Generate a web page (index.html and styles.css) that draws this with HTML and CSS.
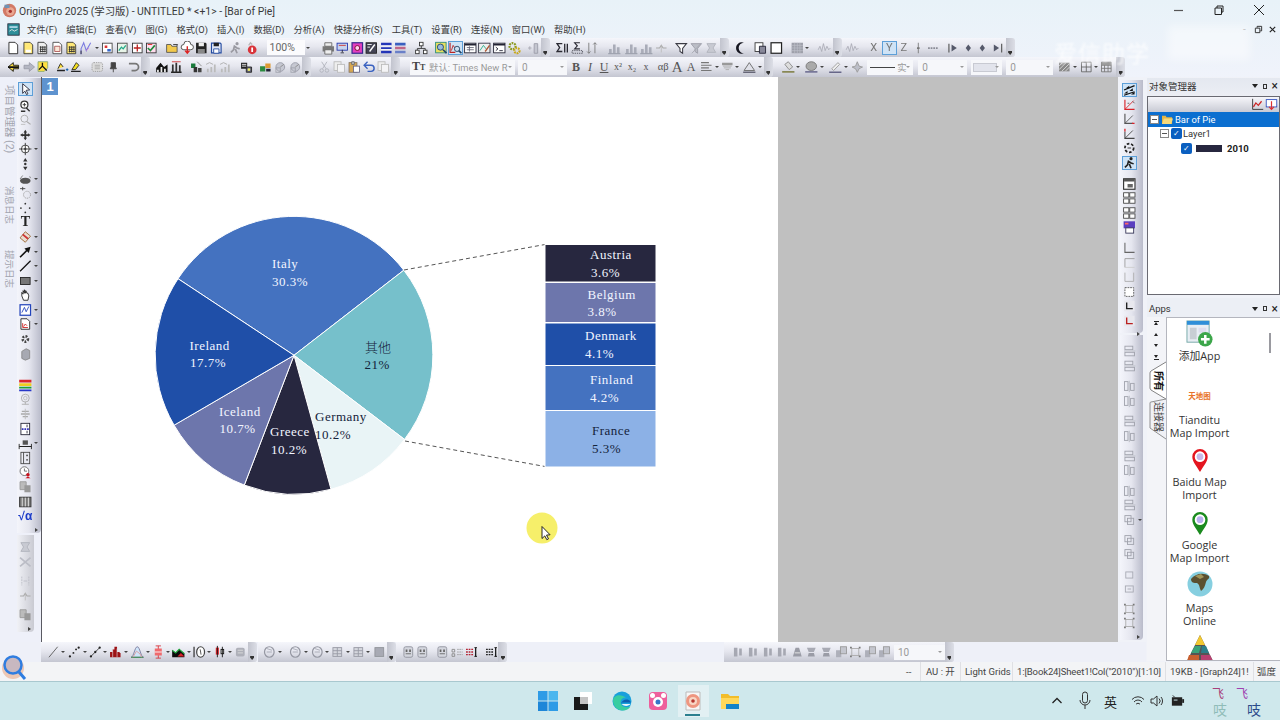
FILE: index.html
```html
<!DOCTYPE html>
<html lang="zh">
<head>
<meta charset="utf-8">
<title>OriginPro 2025</title>
<link rel="stylesheet" href="styles.css">
</head>
<body>
<svg class="defs" aria-hidden="true">
<symbol id="doc" viewBox="0 0 16 16"><path d="M3 1.5h7l3 3v10H3z" fill="#fff" stroke="#222"/></symbol>
<symbol id="docy" viewBox="0 0 16 16"><path d="M3 1.5h7l3 3v10H3z" fill="#ffe878" stroke="#333"/><path d="M5 10h6v3H5z" fill="#fff"/></symbol>
<symbol id="tbl" viewBox="0 0 16 16"><path d="M3 1.5h7l3 3v10H3z" fill="#eee" stroke="#333"/><path d="M5 7h7M5 9.5h7M5 12h7M6 6v7M8.500 6v7M11 6v7" stroke="#333"/></symbol>
<symbol id="tbly" viewBox="0 0 16 16"><path d="M3 1.500h7l3 3v10H3z" fill="#ffe878" stroke="#333"/><path d="M5 7h7M5 9.500h7M5 12h7M6 6v7M8.500 6v7M11 6v7" stroke="#333"/></symbol>
<symbol id="note" viewBox="0 0 16 16"><path d="M3 1.500h7l3 3v10H3z" fill="#fff" stroke="#444"/><path d="M5 6h6v6H5z" fill="#fbe7d8" stroke="#a55"/></symbol>
<symbol id="grf" viewBox="0 0 16 16"><path d="M2 15V9l3-7 3 9 5-9" fill="none" stroke="#7a7ae0" stroke-width="1.200"/><path d="M2 15v-4" stroke="#222"/><path d="M8 11l3-3" stroke="#e58bd0"/></symbol>
<symbol id="im1" viewBox="0 0 16 16"><rect x="2.500" y="2.500" width="11" height="11" fill="#fff" stroke="#444"/><path d="M5 5h3v3H5z" fill="#d33"/><path d="M8 9h4v3H8z" fill="#36c"/></symbol>
<symbol id="im2" viewBox="0 0 16 16"><rect x="2.500" y="2.500" width="11" height="11" fill="#e8f4e8" stroke="#444"/><path d="M4 11l3-4 2 2 3-4" fill="none" stroke="#2a8" stroke-width="1.500"/></symbol>
<symbol id="im3" viewBox="0 0 16 16"><rect x="2.500" y="2.500" width="11" height="11" fill="#fff" stroke="#333"/><path d="M8 4v8M4 8h8" stroke="#b22" stroke-width="1.500"/></symbol>
<symbol id="im4" viewBox="0 0 16 16"><rect x="2.500" y="2.500" width="11" height="11" fill="#fde" stroke="#333"/><path d="M4 8l3 3 5-6" fill="none" stroke="#1a8a3a" stroke-width="1.800"/><path d="M4 4h5" stroke="#d22"/></symbol>
<symbol id="fold" viewBox="0 0 16 16"><path d="M1.500 13V4h5l1 2h6v7z" fill="#f2c94c" stroke="#555"/><path d="M9 4h5l-1 2" fill="none" stroke="#333"/></symbol>
<symbol id="cloud" viewBox="0 0 16 16"><path d="M4 10a3 3 0 0 1 0-6 4 4 0 0 1 8 0 3 3 0 0 1 0 6z" fill="#fff" stroke="#444"/><path d="M8 6v8M5.500 11L8 14l2.500-3" fill="none" stroke="#d22" stroke-width="1.600"/></symbol>
<symbol id="disk" viewBox="0 0 16 16"><path d="M2 2h11l1 1v11H2z" fill="#222"/><path d="M5 2h6v4H5z" fill="#eee"/><path d="M4 9h8v5H4z" fill="#888"/></symbol>
<symbol id="diskb" viewBox="0 0 16 16"><path d="M2.500 2.500h10l1 1v10h-11z" fill="#dfe6f7" stroke="#234ba0" stroke-width="1.300"/><path d="M5 2h6v4H5z" fill="#222"/><path d="M5 9h6v5H5z" fill="#fff" stroke="#234ba0"/></symbol>
<symbol id="run" viewBox="0 0 16 16"><circle cx="10" cy="3" r="1.800" fill="#9a9aa2"/><path d="M3 13l3-3 1-4 3 2 3 1M8 9l2 5" fill="none" stroke="#9a9aa2" stroke-width="2"/></symbol>
<symbol id="stop" viewBox="0 0 16 16"><circle cx="9" cy="10" r="5" fill="#d9343a"/><path d="M9 7.500v5" stroke="#fff" stroke-width="2"/><path d="M5 5l2-3 2 2" fill="none" stroke="#b8b8b8" stroke-width="1.500"/></symbol>
<symbol id="prt" viewBox="0 0 16 16"><path d="M1.500 6h13v6h-13z" fill="#777"/><path d="M4 2h8v4H4zM4 10h8v5H4z" fill="#eee" stroke="#666"/></symbol>
<symbol id="scr" viewBox="0 0 16 16"><rect x="2" y="2.500" width="12" height="8" fill="#c7d4ee" stroke="#2233aa"/><path d="M6 13h4v1H6z" fill="#223"/><path d="M8 10v3" stroke="#223"/><path d="M4 5h8" stroke="#c33"/></symbol>
<symbol id="pnk" viewBox="0 0 16 16"><rect x="2" y="2" width="12" height="12" fill="#e33fc0" stroke="#3a2a90" stroke-width="1.400"/><circle cx="8" cy="8" r="2.800" fill="#ffd0f0" stroke="#702"/></symbol>
<symbol id="pen" viewBox="0 0 16 16"><rect x="2" y="2" width="12" height="12" fill="#445" stroke="#222"/><path d="M3.500 4h5M3.500 7h3" stroke="#fff"/><path d="M6 12l6-8" stroke="#fff" stroke-width="1.600"/></symbol>
<symbol id="bars3" viewBox="0 0 16 16"><path d="M2 2h12v3H2zM2 7h12v2H2zM2 11h12v3H2z" fill="#2436b8"/><path d="M2 5.500h12M2 10h12" stroke="#fff"/></symbol>
<symbol id="lay" viewBox="0 0 16 16"><path d="M2 2h12v3H2z" fill="#3a5fc0"/><path d="M2 6.500h12v3H2z" fill="#c06688"/><path d="M2 11h12v3H2z" fill="#6a80c8"/></symbol>
<symbol id="tree" viewBox="0 0 16 16"><g fill="#fff" stroke="#333"><rect x="6" y="1.500" width="4" height="4"/><rect x="1.500" y="10.500" width="4" height="4"/><rect x="10.500" y="10.500" width="4" height="4"/></g><path d="M8 5.500v3M3.500 10.500v-2h9v2" fill="none" stroke="#333"/></symbol>
<symbol id="find" viewBox="0 0 16 16"><rect x="1.500" y="1.500" width="12" height="12" fill="#e8e060" stroke="#2a8a7a"/><circle cx="7" cy="7" r="3.500" fill="#9bd" stroke="#246"/><path d="M10 10l4 4" stroke="#246" stroke-width="2"/></symbol>
<symbol id="find2" viewBox="0 0 16 16"><path d="M2 2v11h6" fill="none" stroke="#b22" stroke-width="1.300"/><path d="M3.500 11l2-6 2 3" fill="none" stroke="#b22"/><circle cx="10" cy="9" r="3" fill="#cde" stroke="#246"/><path d="M12 11l3 3" stroke="#246" stroke-width="2"/></symbol>
<symbol id="win" viewBox="0 0 16 16"><rect x="1.500" y="2.500" width="13" height="11" fill="#fff" stroke="#223"/><path d="M1.500 3h13v2h-13z" fill="#223"/><path d="M4 7.500h8M4 10h8M7 6v6" stroke="#667"/></symbol>
<symbol id="win2" viewBox="0 0 16 16"><rect x="1.500" y="2.500" width="13" height="11" fill="#eee" stroke="#334"/><path d="M3 11l4-6 3 4" fill="none" stroke="#2a8"/><path d="M9 12l5-7" stroke="#a53" stroke-width="1.500"/></symbol>
<symbol id="term" viewBox="0 0 16 16"><rect x="1.500" y="2.500" width="13" height="11" fill="#fff" stroke="#223"/><path d="M1.500 3h13v2h-13z" fill="#223"/><path d="M4 7l2.500 2L4 11M8 11h4" fill="none" stroke="#223"/></symbol>
<symbol id="gear" viewBox="0 0 16 16"><circle cx="6" cy="6" r="3.500" fill="none" stroke="#8a9a20" stroke-width="2.500" stroke-dasharray="2 1"/><circle cx="11" cy="11" r="3" fill="none" stroke="#c8a818" stroke-width="2.500" stroke-dasharray="2 1"/></symbol>
<symbol id="gbar" viewBox="0 0 16 16"><path d="M2 14V9h3v5zM6.500 14V4h3v10zM11 14V7h3v7z" fill="#a9acb8"/><path d="M1 14.500h14" stroke="#8f92a0"/></symbol>
<symbol id="gplus" viewBox="0 0 16 16"><path d="M2 8h4M4 6v4" stroke="#a8a8b2"/><path d="M9 3h4v11H9z" fill="#c4c6d0" stroke="#9a9ca8"/></symbol>
<symbol id="sig" viewBox="0 0 16 16"><path d="M8 3H2l3 4.500L2 12h6" fill="none" stroke="#2a2a33" stroke-width="1.500"/><path d="M10 3h1.500v10H10zM13 3h1.500v10H13z" fill="#2a2a33"/></symbol>
<symbol id="sig2" viewBox="0 0 16 16"><path d="M11 2H5l3 3.500L5 9h6" fill="none" stroke="#2a2a33" stroke-width="1.300"/><path d="M2 11h12v3H2z" fill="none" stroke="#4a4a55" stroke-dasharray="1.500 1"/></symbol>
<symbol id="sort" viewBox="0 0 16 16"><path d="M4 2v12M2 12l2 2 2-2M11 14V2M9 4l2-2 2 2" fill="none" stroke="#777"/></symbol>
<symbol id="funnel" viewBox="0 0 16 16"><path d="M2 3h12L9.500 8.500V14l-3-2V8.500z" fill="#fff" stroke="#3b3b44" stroke-width="1.200"/></symbol>
<symbol id="funnelg" viewBox="0 0 16 16"><path d="M2 3h12L9.500 8.500V14l-3-2V8.500z" fill="#bbbdc6" stroke="#9b9da8"/><path d="M3 14L13 3" stroke="#a5a7b0"/></symbol>
<symbol id="moon" viewBox="0 0 16 16"><path d="M11 2a6.500 6.500 0 1 0 0 12 5.500 5.500 0 0 1 0-12z" fill="#161620"/></symbol>
<symbol id="cop" viewBox="0 0 16 16"><rect x="2" y="2" width="9" height="10" fill="#fff" stroke="#333"/><path d="M7 6h7v8H7z" fill="#889" stroke="#223"/></symbol>
<symbol id="blk" viewBox="0 0 16 16"><rect x="2" y="2" width="12" height="12" fill="#fff" stroke="#222" stroke-width="1.400"/><path d="M10 4.500a3.500 3.500 0 1 0 0 7 3 3 0 0 1 0-7z" fill="#222"/></symbol>
<symbol id="gmat" viewBox="0 0 16 16"><rect x="1.500" y="2" width="13" height="12" fill="#9ea0aa"/><path d="M1.500 5h13M1.500 8h13M1.500 11h13M5 2v12M8 2v12M11 2v12" stroke="#c0c2cc" stroke-width=".7"/></symbol>
<symbol id="gwav" viewBox="0 0 16 16"><path d="M1 10l2-4 2 6 2-9 2 8 2-5 2 4 2-2" fill="none" stroke="#aaacb6"/></symbol>
<symbol id="gdash" viewBox="0 0 16 16"><path d="M2 8h12" stroke="#8a8c96" stroke-width="2" stroke-dasharray="2 1"/></symbol>
<symbol id="bar1" viewBox="0 0 16 16"><path d="M8 2v12" stroke="#777"/><path d="M6.500 7h3v2h-3z" fill="#777"/></symbol>
<symbol id="nav1" viewBox="0 0 16 16"><path d="M3 3v10" stroke="#555" stroke-width="1.300"/><path d="M12 8L6 4v8z" fill="#55596a"/></symbol>
<symbol id="nav2" viewBox="0 0 16 16"><path d="M8 4l-3 4 3 4 3-4z" fill="#55596a"/></symbol>
<symbol id="nav3" viewBox="0 0 16 16"><path d="M13 3v10" stroke="#555" stroke-width="1.300"/><path d="M4 4l6 4-6 4z" fill="#55596a"/></symbol>
<symbol id="bkl" viewBox="0 0 16 16"><path d="M2 8l6-5v3h6v4H8v3z" fill="#ffe040" stroke="#111"/><path d="M2 8h12" stroke="#111" stroke-width="2"/></symbol>
<symbol id="bkr" viewBox="0 0 16 16"><path d="M14 8L8 3v3H2v4h6v3z" fill="#b4b6c2" stroke="#9a9ca8"/></symbol>
<symbol id="bk3" viewBox="0 0 16 16"><path d="M2 2h11v7l-4 4H2z" fill="#ffe040" stroke="#8a7"/><path d="M3 11l4-4 5 5M7 7V3" stroke="#111" stroke-width="1.500" fill="none"/></symbol>
<symbol id="pt1" viewBox="0 0 16 16"><path d="M2 12h9" stroke="#222" stroke-width="1.500"/><path d="M3 10l3-6 3 4" fill="#ffe040" stroke="#222"/><path d="M12 11h3M13.500 9.500v3" stroke="#05a"/></symbol>
<symbol id="pt2" viewBox="0 0 16 16"><path d="M2 13h11" stroke="#222" stroke-width="1.500"/><path d="M3 11l5-8 3 3-4 5z" fill="#f5e020" stroke="#222"/></symbol>
<symbol id="grp" viewBox="0 0 16 16"><rect x="2" y="3" width="12" height="10" rx="2" fill="#ddd" stroke="#999" stroke-dasharray="1.500 1"/><path d="M5 6h6M5 8h6M5 10h6" stroke="#aaa"/></symbol>
<symbol id="pin" viewBox="0 0 16 16"><path d="M5.500 3h5v5l1 2h-7l1-2zM8 10v4" fill="#444" stroke="#444"/></symbol>
<symbol id="undo" viewBox="0 0 16 16"><path d="M3 4h7a3.500 3.500 0 0 1 0 8H6" fill="none" stroke="#777" stroke-width="2"/></symbol>
<symbol id="ch1" viewBox="0 0 16 16"><path d="M1 14V9l5-6 4 5 4-3v9z" fill="#111"/><path d="M2 14V11h2v3zM6 14V8h2v6zM10 14V10h2v4z" fill="#eee"/></symbol>
<symbol id="ch2" viewBox="0 0 16 16"><path d="M2 14h12" stroke="#222" stroke-width="1.500"/><path d="M3 5h2v9H3zM7 3h2v11H7zM11 6h2v8h-2z" fill="#333"/><path d="M3 2h10" stroke="#c33"/></symbol>
<symbol id="ch3" viewBox="0 0 16 16"><path d="M2 4h5v5H2z" fill="#187a3a"/><path d="M5 8h4v6H5z" fill="#333"/><path d="M10 9h4v5h-4z" fill="#444"/><path d="M9 2l5 5" stroke="#888"/></symbol>
<symbol id="ch4" viewBox="0 0 16 16"><path d="M3 14V10h2v4zM7 14V8h2v6zM11 14V5h2v9z" fill="#bbb"/><path d="M2 5l4-2 4 2" fill="none" stroke="#aaa"/></symbol>
<symbol id="ch5" viewBox="0 0 16 16"><path d="M2 3h7v7H2z" fill="#222"/><path d="M3 5h5M3 7h5" stroke="#eee"/><path d="M8 8h6v6H8z" fill="#667" stroke="#222"/><circle cx="11" cy="11" r="1.500" fill="#ee6"/></symbol>
<symbol id="ch6" viewBox="0 0 16 16"><path d="M2 7h6v6H2z" fill="#2b8a3e"/><path d="M8 4h6v5H8z" fill="#d93"/><path d="M9 10h5v3H9z" fill="#223"/></symbol>
<symbol id="gcirc" viewBox="0 0 16 16"><circle cx="8" cy="8" r="5" fill="#c6c8d2" stroke="#9a9ca8"/><path d="M8 8l4-3" stroke="#888"/><rect x="3" y="9" width="5" height="5" fill="none" stroke="#a0a2ac"/></symbol>
<symbol id="cut" viewBox="0 0 16 16"><path d="M5 2l5 8M11 2l-5 8" stroke="#b0b2bc"/><circle cx="5" cy="12" r="2" fill="none" stroke="#b0b2bc"/><circle cx="11" cy="12" r="2" fill="none" stroke="#b0b2bc"/></symbol>
<symbol id="cp" viewBox="0 0 16 16"><rect x="2" y="2" width="8" height="10" fill="#eee" stroke="#bbb"/><rect x="6" y="5" width="8" height="9" fill="#f4f4f6" stroke="#bbb"/></symbol>
<symbol id="paste" viewBox="0 0 16 16"><rect x="2" y="3" width="9" height="11" fill="#d8a850" stroke="#876"/><path d="M5 2h3v3H5z" fill="#ccc" stroke="#666"/><rect x="7" y="7" width="7" height="7" fill="#fff" stroke="#668"/></symbol>
<symbol id="undob" viewBox="0 0 16 16"><path d="M3 6h7a3 3 0 0 1 0 7H6" fill="none" stroke="#3a62c0" stroke-width="1.700"/><path d="M6 2L2 6l4 4" fill="none" stroke="#3a62c0" stroke-width="1.500"/></symbol>
<symbol id="alef" viewBox="0 0 16 16"><path d="M2 3h9M2 6h12M2 9h9M2 12h12" stroke="#777" stroke-width="1.300"/></symbol>
<symbol id="border" viewBox="0 0 16 16"><path d="M2 3h12v3H2z" fill="#999"/><path d="M3 7h10M4 9h8M6 11h4" stroke="#aaa"/></symbol>
<symbol id="tri" viewBox="0 0 16 16"><path d="M8 3l6 9H2z" fill="#dfe0e8" stroke="#666"/><path d="M1 14h14" stroke="#667" stroke-width="1.500"/></symbol>
<symbol id="fill" viewBox="0 0 16 16"><path d="M8 2l5 6-4 3-5-6z" fill="#ddd" stroke="#888"/><path d="M1 13.500h14" stroke="#885" stroke-width="2"/></symbol>
<symbol id="sphere" viewBox="0 0 16 16"><ellipse cx="8" cy="7" rx="6" ry="5" fill="#aaa" stroke="#777"/><path d="M1 13.500h14" stroke="#779" stroke-width="2"/></symbol>
<symbol id="pencil" viewBox="0 0 16 16"><path d="M4 10l7-7 2 2-7 7z" fill="#eee" stroke="#999"/><path d="M1 14h14" stroke="#668" stroke-width="1.500"/></symbol>
<symbol id="hat" viewBox="0 0 16 16"><path d="M8 2l2 5 4 1-4 2-2 4-2-4-4-2 4-1z" fill="#bcbec8" stroke="#999"/></symbol>
<symbol id="pat" viewBox="0 0 16 16"><rect x="2" y="3" width="12" height="10" fill="#888"/><path d="M2 11l8-8M5 13l9-9M2 7l4-4M9 13l5-5" stroke="#ddd"/></symbol>
<symbol id="gridg" viewBox="0 0 16 16"><path d="M2.500 2.500h11v11h-11zM2.500 8h11M8 2.500v11" fill="none" stroke="#666"/></symbol>
<symbol id="grid3" viewBox="0 0 16 16"><path d="M2.500 2.500h11v11h-11zM2.500 6h11M2.500 9.500h11M6 2.500v11M10 2.500v11" fill="none" stroke="#777"/><path d="M2.500 2.500h11V6h-11z" fill="#999"/></symbol>
<symbol id="l1" viewBox="0 0 16 16"><path d="M3 2v11h11" fill="none" stroke="#333"/></symbol>
<symbol id="sel" viewBox="0 0 16 16"><path d="M5 2l8 7-4 .500 2 4-1.500 1-2-4L5 13z" fill="#fff" stroke="#223"/></symbol>
<symbol id="zoomi" viewBox="0 0 16 16"><circle cx="7" cy="6.500" r="4" fill="#fff" stroke="#333" stroke-width="1.400"/><path d="M5 6.500h4M7 4.500v4" stroke="#333"/><path d="M3 14h5M9 10l4 4" stroke="#333" stroke-width="1.600"/></symbol>
<symbol id="zoomo" viewBox="0 0 16 16"><circle cx="7" cy="6.500" r="4" fill="none" stroke="#aaa"/><path d="M10 10l4 3" stroke="#aaa" stroke-width="1.400"/><path d="M3 13h5" stroke="#bbb"/></symbol>
<symbol id="pmv" viewBox="0 0 16 16"><path d="M8 2l2 3H9v2h2V6l3 2-3 2V9H9v2h1l-2 3-2-3h1V9H5v1L2 8l3-2v1h2V5H6z" fill="#333"/></symbol>
<symbol id="tgt" viewBox="0 0 16 16"><circle cx="8" cy="8" r="4.500" fill="#fff" stroke="#333"/><path d="M8 1v14M1 8h14" stroke="#333"/><circle cx="8" cy="8" r="1.300" fill="#333"/></symbol>
<symbol id="mv" viewBox="0 0 16 16"><path d="M8 1l2.500 4h-5zM8 15l-2.500-4h5z" fill="#333"/><circle cx="8" cy="8" r="1.400" fill="#333"/></symbol>
<symbol id="mask" viewBox="0 0 16 16"><ellipse cx="8" cy="10" rx="6" ry="3.500" fill="#555"/><path d="M2 8l3-4M13 5l1 2" stroke="#777"/></symbol>
<symbol id="spl" viewBox="0 0 16 16"><path d="M2 3h6M5 1v4" stroke="#444"/><circle cx="10" cy="10" r="4" fill="none" stroke="#999" stroke-dasharray="1.500 1"/></symbol>
<symbol id="dots" viewBox="0 0 16 16"><g fill="#333"><circle cx="8" cy="3" r="1"/><circle cx="13" cy="8" r="1"/><circle cx="8" cy="13" r="1"/><circle cx="3" cy="8" r="1"/></g></symbol>
<symbol id="eras" viewBox="0 0 16 16"><path d="M2 9l6-7 6 5-6 7z" fill="#e9ddd0" stroke="#963"/><path d="M5 5l6 5" stroke="#c33" stroke-width="2"/></symbol>
<symbol id="arr" viewBox="0 0 16 16"><path d="M2 14L11 5" stroke="#111" stroke-width="1.800"/><path d="M14 2L7 4l5 5z" fill="#111"/></symbol>
<symbol id="ln" viewBox="0 0 16 16"><path d="M2 14L14 2" stroke="#111" stroke-width="1.400"/></symbol>
<symbol id="rc" viewBox="0 0 16 16"><rect x="2.500" y="4" width="11" height="8" fill="#777" stroke="#222"/></symbol>
<symbol id="hand" viewBox="0 0 16 16"><path d="M4 9V5l1.500 2V3l1.500 3V2l1.500 4V3l1.500 3 1 0 1 3-1 5H6z" fill="#fff" stroke="#222"/></symbol>
<symbol id="wb" viewBox="0 0 16 16"><rect x="2" y="2" width="12" height="12" fill="#fff" stroke="#2244bb" stroke-width="1.400"/><path d="M4 11l3-6 2 5 3-6" fill="none" stroke="#2244bb"/></symbol>
<symbol id="wr" viewBox="0 0 16 16"><path d="M3 2h7l3 3v9H3z" fill="#fff" stroke="#222"/><path d="M5 7v5h6M6 11l2-3 2 2" fill="none" stroke="#c22"/></symbol>
<symbol id="gr2" viewBox="0 0 16 16"><circle cx="8" cy="8" r="3" fill="none" stroke="#444" stroke-width="3" stroke-dasharray="2 1.500"/></symbol>
<symbol id="gry" viewBox="0 0 16 16"><path d="M4 5l5-3 4 2v9l-5 2-4-2z" fill="#a7a9b2" stroke="#888"/></symbol>
<symbol id="clr" viewBox="0 0 16 16"><path d="M1 2h14v3H1z" fill="#d9262c"/><path d="M1 6h14v3H1z" fill="#f0cc20"/><path d="M1 10h14v2H1z" fill="#1ea03a"/><path d="M1 13h14v2H1z" fill="#2838c8"/></symbol>
<symbol id="cog" viewBox="0 0 16 16"><circle cx="8" cy="7" r="4.500" fill="none" stroke="#aaa"/><path d="M8 11v3M4 14h8" stroke="#aaa"/><circle cx="8" cy="7" r="2" fill="none" stroke="#bbb"/></symbol>
<symbol id="cy" viewBox="0 0 16 16"><path d="M3 8h10M4 5h8M5 11h6" stroke="#aaa" stroke-width="1.500"/><path d="M8 2v12" stroke="#bbb"/></symbol>
<symbol id="rdr" viewBox="0 0 16 16"><rect x="3" y="1.500" width="10" height="13" fill="#fff" stroke="#223"/><path d="M4 8h8" stroke="#33b" stroke-width="2" stroke-dasharray="2 1"/><path d="M10 3v3M10 10v3" stroke="#223"/></symbol>
<symbol id="msr" viewBox="0 0 16 16"><path d="M1 12h14" stroke="#222" stroke-width="1.300"/><path d="M1 9v6M15 9v6" stroke="#222"/><rect x="5" y="5" width="6" height="5" fill="#555"/></symbol>
<symbol id="rdl" viewBox="0 0 16 16"><rect x="3" y="1.500" width="10" height="13" fill="none" stroke="#444"/><path d="M6 1.500v13" stroke="#444"/><circle cx="10" cy="5" r="1" fill="#444"/><circle cx="10" cy="10" r="1" fill="#444"/></symbol>
<symbol id="rdc" viewBox="0 0 16 16"><circle cx="7" cy="7" r="5" fill="#fff" stroke="#666"/><path d="M7 4v3h3" fill="none" stroke="#666"/><circle cx="11" cy="11" r="2" fill="#c9121c"/><path d="M8 15l3-2 3 2z" fill="#c9121c"/></symbol>
<symbol id="gdocs" viewBox="0 0 16 16"><path d="M2 2h7v9H2z" fill="#bbb" stroke="#999"/><path d="M7 6h7v8H7z" fill="#999"/></symbol>
<symbol id="cols" viewBox="0 0 16 16"><rect x="1.500" y="2.500" width="13" height="11" fill="#777" stroke="#333"/><path d="M4.500 3v10M8 3v10M11.500 3v10" stroke="#eee"/></symbol>
<symbol id="gX" viewBox="0 0 16 16"><path d="M3 3h10L10 8l3 5H3l3-5z" fill="#c8cad2" stroke="#b0b2bc"/></symbol>
<symbol id="gX2" viewBox="0 0 16 16"><path d="M2 3l12 10M14 3L2 13" stroke="#bbbdc6" stroke-width="2"/></symbol>
<symbol id="gX3" viewBox="0 0 16 16"><path d="M4 3v10M12 3v10" stroke="#bbbdc6" stroke-dasharray="2 1"/><path d="M6 8h4" stroke="#bbbdc6"/></symbol>
<symbol id="gX4" viewBox="0 0 16 16"><path d="M2 8h4l2-3 2 3h4" fill="none" stroke="#aaa" stroke-width="1.300"/><path d="M8 5v8" stroke="#bbb"/></symbol>
<symbol id="rt1" viewBox="0 0 16 16"><path d="M2 12l4-3v3zM8 9l4-3v3zM4 6l4-3v3zM10 13l4-3v3z" fill="#111"/><path d="M2 8l12-5M2 14l12-4" stroke="#111" stroke-width="1.500"/></symbol>
<symbol id="axr" viewBox="0 0 16 16"><path d="M3 2v11h11" fill="none" stroke="#d8232a" stroke-width="1.300"/><path d="M3 13L13 3" stroke="#d8232a"/><path d="M12 4l2 2M6 6h2" stroke="#555"/></symbol>
<symbol id="axk" viewBox="0 0 16 16"><path d="M3 2v11h9" fill="none" stroke="#555" stroke-width="1.300"/><path d="M3 13L12 4" stroke="#555"/><path d="M11 13h3" stroke="#d8232a" stroke-width="1.500"/></symbol>
<symbol id="axm" viewBox="0 0 16 16"><path d="M3 5v8h11" fill="none" stroke="#444" stroke-width="1.200"/><path d="M3 13L12 4" stroke="#444"/><path d="M3 2v3" stroke="#d8232a" stroke-width="1.500"/></symbol>
<symbol id="swl" viewBox="0 0 16 16"><circle cx="8" cy="8" r="5" fill="none" stroke="#222" stroke-width="2" stroke-dasharray="3 2"/><path d="M6 8h4" stroke="#222"/></symbol>
<symbol id="rns" viewBox="0 0 16 16"><circle cx="10" cy="3" r="1.800" fill="#222"/><path d="M3 13l3-3 1-4 3 2 3 1M8 9l2 5" fill="none" stroke="#222" stroke-width="1.800"/></symbol>
<symbol id="r1" viewBox="0 0 16 16"><rect x="1.500" y="2" width="13" height="12" fill="#fff" stroke="#333" stroke-width="1.300"/><path d="M2 2h12v3H2z" fill="#555"/><path d="M6 8h6v4H6z" fill="#666"/></symbol>
<symbol id="r2" viewBox="0 0 16 16"><g fill="#fff" stroke="#444"><rect x="1.500" y="2" width="6" height="5"/><rect x="8.500" y="2" width="6" height="5"/><rect x="1.500" y="9" width="6" height="5"/><rect x="8.500" y="9" width="6" height="5"/></g></symbol>
<symbol id="r3" viewBox="0 0 16 16"><rect x="1.500" y="1.500" width="13" height="8" fill="#5b3fc0"/><path d="M3 4h4" stroke="#f66" stroke-width="2"/><rect x="4" y="9" width="9" height="6" fill="#fff" stroke="#335"/></symbol>
<symbol id="bx" viewBox="0 0 16 16"><path d="M3 2v11h11" fill="none" stroke="#666" stroke-width="1.200"/></symbol>
<symbol id="bxg" viewBox="0 0 16 16"><path d="M3 13V3h11" fill="none" stroke="#999"/><path d="M3 13h11" stroke="#ccc"/></symbol>
<symbol id="bxh" viewBox="0 0 16 16"><path d="M3 3v10h10V3" fill="none" stroke="#aaa"/></symbol>
<symbol id="bxd" viewBox="0 0 16 16"><rect x="3" y="3" width="10" height="10" fill="#fff" stroke="#555" stroke-dasharray="2 1"/></symbol>
<symbol id="bxr" viewBox="0 0 16 16"><rect x="2" y="2" width="12" height="12" fill="#e8e8ee"/><path d="M5 4v7h7" fill="none" stroke="#222" stroke-width="1.600"/></symbol>
<symbol id="bxs" viewBox="0 0 16 16"><rect x="2" y="2" width="12" height="12" fill="#e8e8ee"/><path d="M5 4v7h7" fill="none" stroke="#b22" stroke-width="1.600"/></symbol>
<symbol id="a1" viewBox="0 0 16 16"><g fill="none" stroke="#9ea0aa"><rect x="3" y="2.500" width="9" height="4"/><rect x="3" y="9.500" width="11" height="4"/></g><path d="M2 8h13" stroke="#b8bac4"/></symbol>
<symbol id="a2" viewBox="0 0 16 16"><g fill="none" stroke="#9ea0aa"><rect x="2.500" y="3" width="4" height="10"/><rect x="9.500" y="5" width="4" height="8"/></g><path d="M8 2v13" stroke="#b8bac4"/></symbol>
<symbol id="a3" viewBox="0 0 16 16"><g fill="none" stroke="#9ea0aa"><rect x="3" y="3" width="7" height="7"/><rect x="6" y="6" width="7" height="7"/></g></symbol>
<symbol id="a4" viewBox="0 0 16 16"><rect x="4" y="4" width="8" height="8" fill="none" stroke="#aaa"/><path d="M2 2h2v2H2zM12 2h2v2h-2zM2 12h2v2H2zM12 12h2v2h-2z" fill="#777"/></symbol>
<symbol id="a5" viewBox="0 0 16 16"><rect x="4" y="4.500" width="8" height="7" fill="none" stroke="#a6a8b2"/></symbol>
<symbol id="a6" viewBox="0 0 16 16"><rect x="3.500" y="4.500" width="9" height="7" fill="none" stroke="#a6a8b2"/><path d="M6 8h4" stroke="#a6a8b2"/></symbol>
<symbol id="b1" viewBox="0 0 16 16"><path d="M3 3h4v10H3zM9 4h3v8H9z" fill="#a6a8b2"/></symbol>
<symbol id="b2" viewBox="0 0 16 16"><path d="M3 13L6 3h4l3 10z" fill="#9a9ca6"/><path d="M5 9h6" stroke="#eee"/></symbol>
<symbol id="b3" viewBox="0 0 16 16"><path d="M3 3h10l-2 5H5z" fill="#a8aab4"/><path d="M5 9h6l1 4H4z" fill="#9a9ca6"/></symbol>
<symbol id="b4" viewBox="0 0 16 16"><rect x="2" y="6" width="6" height="8" fill="#aeb0ba"/><rect x="7" y="2" width="7" height="8" fill="#c4c6ce" stroke="#999"/></symbol>
<symbol id="q1" viewBox="0 0 16 16"><rect x="3" y="2" width="10" height="12" rx="2" fill="#d4d6de" stroke="#8f919c"/><path d="M5 5h2v3H5zM9 5h2v3H9z" fill="#666"/><path d="M5 10h6" stroke="#666"/></symbol>
<symbol id="q2" viewBox="0 0 16 16"><path d="M2 5h3v3H2zM2 10h3v3H2z" fill="none" stroke="#888"/><path d="M8 5h6M8 8h6M8 11h6" stroke="#888" stroke-dasharray="1.500 1"/></symbol>
<symbol id="q3" viewBox="0 0 16 16"><path d="M2 5h9M2 8h9M2 11h9" stroke="#b22030" stroke-width="1.600" stroke-dasharray="2 1"/><path d="M13 3v10" stroke="#111" stroke-width="1.400"/><path d="M11.500 3h3M11.500 13h3" stroke="#111"/></symbol>
<symbol id="q4" viewBox="0 0 16 16"><path d="M2 5h9M2 8h9M2 11h9" stroke="#222" stroke-width="1.600" stroke-dasharray="2 1"/><path d="M13 3v10" stroke="#111" stroke-width="1.400"/><path d="M11.500 3h3M11.500 13h3" stroke="#111"/></symbol>
<symbol id="s1" viewBox="0 0 16 16"><path d="M3 14L13 2" stroke="#555"/></symbol>
<symbol id="s2" viewBox="0 0 16 16"><g fill="#222"><circle cx="3" cy="13" r="1.300"/><circle cx="7" cy="9" r="1.100"/><circle cx="10" cy="5" r="1.100"/><circle cx="13" cy="3" r="1.300"/></g></symbol>
<symbol id="s3" viewBox="0 0 16 16"><path d="M3 13L13 3" stroke="#333"/><g fill="#222"><circle cx="3" cy="13" r="1.300"/><circle cx="8" cy="8" r="1.300"/><circle cx="13" cy="3" r="1.300"/></g></symbol>
<symbol id="s4" viewBox="0 0 16 16"><path d="M2 14V8h3V5h2V2h3v6h3v1h1v5z" fill="#9c1215"/><path d="M5 14V6M10 14V4" stroke="#e8e8ee" stroke-width=".7"/></symbol>
<symbol id="s5" viewBox="0 0 16 16"><path d="M1 14C4 14 5 2 8 2s4 12 7 12z" fill="#cfe5fa" stroke="#779"/><path d="M1 14h14" stroke="#2a8a3a"/><path d="M3 14l4-7 4 3 2 4" fill="none" stroke="#d99"/></symbol>
<symbol id="s6" viewBox="0 0 16 16"><path d="M8 1v14" stroke="#d8333a"/><path d="M4 4h8v8H4z" fill="#ef6a6e"/><path d="M4 8h8" stroke="#fff"/><path d="M5 1h6M5 15h6" stroke="#d8333a"/></symbol>
<symbol id="s7" viewBox="0 0 16 16"><path d="M1 14V6l4 3 4-4 6 5v4z" fill="#0c0c0c"/><path d="M1 6l4 3 4-4 6 5" fill="none" stroke="#1ea03a" stroke-width="1.400"/><path d="M7 13l4-4 4 4z" fill="#d8232a"/></symbol>
<symbol id="s8" viewBox="0 0 16 16"><ellipse cx="9.500" cy="8" rx="4.500" ry="6" fill="#fff" stroke="#444" stroke-width="1.400"/><path d="M2 2v12" stroke="#333" stroke-width="1.400"/><path d="M9 5l1 6" stroke="#444"/></symbol>
<symbol id="s9" viewBox="0 0 16 16"><rect x="4" y="3" width="3.500" height="8" fill="#d8232a"/><path d="M5.800 1v13" stroke="#111"/><rect x="10" y="5" width="3" height="5" fill="#fff" stroke="#111"/><path d="M11.500 2v12" stroke="#111"/></symbol>
<symbol id="s10" viewBox="0 0 16 16"><rect x="3" y="3" width="10" height="10" rx="2" fill="#aeb0b9"/><path d="M5 6h6M5 9h6" stroke="#ddd"/></symbol>
<symbol id="t1" viewBox="0 0 16 16"><ellipse cx="8" cy="8" rx="5.500" ry="6" fill="none" stroke="#9597a2" stroke-width="1.400"/><path d="M5 4l6 2M5 8h6" stroke="#a5a7b2"/></symbol>
<symbol id="t2" viewBox="0 0 16 16"><rect x="3" y="3" width="10" height="10" fill="#d5d7de" stroke="#9799a4"/><path d="M3 6.500h10M3 10h10M8 3v10" stroke="#9799a4"/></symbol>
<symbol id="t3" viewBox="0 0 16 16"><rect x="3" y="3" width="10" height="10" fill="#a8aab4" stroke="#909299"/></symbol>
</svg>

<div class="app">
  <div class="title">
    <svg class="appico" viewBox="0 0 18 18"><circle cx="9" cy="9" r="8" fill="#d27a66"/><circle cx="10" cy="10" r="5" fill="#e9a792"/><path d="M3 2h6v4H3z" fill="#6f93b5"/><circle cx="10" cy="10" r="2" fill="#a8322c"/></svg>
    <span class="ttext">OriginPro 2025 (学习版) - UNTITLED * &lt;+1&gt; - [Bar of Pie]</span>
    <span class="winbtns"><svg class="wbt" viewBox="0 0 12 12"><path d="M1 6.500h9" stroke="#555" stroke-width="1.200"/></svg><svg class="wbt" viewBox="0 0 12 12"><path d="M2 4h6.500v6.500H2zM4 4V2h6v6H8.500" fill="none" stroke="#222"/></svg><svg class="wbt" viewBox="0 0 12 12"><path d="M1 1l10 10M11 1L1 11" stroke="#222"/></svg></span>
  </div>
  <div class="menu">
    <svg class="menuico" viewBox="0 0 16 16"><rect x="1" y="1" width="14" height="14" fill="#2e8f9a" stroke="#223"/><path d="M3 5h10" stroke="#bde" stroke-width="2"/><path d="M3 10l3-2 3 2 4-2" fill="none" stroke="#eee"/></svg>
    <span class="mi">文件(F)</span><span class="mi">编辑(E)</span><span class="mi">查看(V)</span><span class="mi">图(G)</span><span class="mi">格式(O)</span><span class="mi">插入(I)</span><span class="mi">数据(D)</span><span class="mi">分析(A)</span><span class="mi">快捷分析(S)</span><span class="mi">工具(T)</span><span class="mi">设置(R)</span><span class="mi">连接(N)</span><span class="mi">窗口(W)</span><span class="mi">帮助(H)</span>
    <span class="mdibtns"><span class="mdi mdig">-</span><svg class="mdis" viewBox="0 0 10 10"><path d="M1.500 3.500h5v5h-5zM3.500 3V1.500h5v5H7" fill="none" stroke="#222"/></svg><svg class="mdis" viewBox="0 0 10 10"><path d="M2 2l6 6M8 2L2 8" stroke="#222" stroke-width="1.300"/></svg></span>
  </div>

  <div class="tb tb1">
    <svg class="i"><use href="#doc"/></svg><svg class="i"><use href="#docy"/></svg><svg class="i"><use href="#tbl"/></svg><svg class="i"><use href="#note"/></svg><svg class="i"><use href="#tbly"/></svg><svg class="i"><use href="#grf"/></svg><i class="dd"></i>
    <svg class="i"><use href="#im1"/></svg><b class="s1"></b><svg class="i"><use href="#im2"/></svg><svg class="i"><use href="#im3"/></svg><svg class="i"><use href="#im4"/></svg><b class="s6"></b>
    <svg class="i"><use href="#fold"/></svg><svg class="i"><use href="#cloud"/></svg><svg class="i"><use href="#disk"/></svg><svg class="i"><use href="#diskb"/></svg><b class="s5"></b>
    <svg class="i"><use href="#run"/></svg><b class="s1"></b><svg class="i"><use href="#stop"/></svg><b class="s8"></b>
    <span class="combo c38"><span class="ctxt">100%</span></span><i class="dd"></i><b class="s10"></b>
    <svg class="i"><use href="#prt"/></svg><svg class="i"><use href="#scr"/></svg><svg class="i"><use href="#pnk"/></svg><svg class="i"><use href="#pen"/></svg><svg class="i"><use href="#bars3"/></svg><svg class="i"><use href="#lay"/></svg><b class="s6"></b>
    <svg class="i"><use href="#tree"/></svg><b class="s5"></b>
    <svg class="i"><use href="#find"/></svg><svg class="i on"><use href="#find2"/></svg><svg class="i"><use href="#win"/></svg><svg class="i"><use href="#win2"/></svg><svg class="i"><use href="#term"/></svg><svg class="i"><use href="#gear"/></svg><b class="s5"></b>
    <svg class="i"><use href="#gplus"/></svg><i class="chev"></i><b class="s5"></b>
    <svg class="i"><use href="#sig"/></svg><b class="s1"></b><svg class="i"><use href="#sig2"/></svg><svg class="i"><use href="#sort"/></svg><b class="s7"></b>
    <svg class="i"><use href="#gbar"/></svg><b class="s3"></b><svg class="i"><use href="#gbar"/></svg><svg class="i"><use href="#gbar"/></svg><b class="s1"></b><svg class="i"><use href="#gX4"/></svg><b class="s5"></b>
    <svg class="i"><use href="#funnel"/></svg><svg class="i"><use href="#funnelg"/></svg><b class="s1"></b><svg class="i"><use href="#gX"/></svg><b class="s1"></b><i class="chev"></i><b class="s5"></b>
    <svg class="i"><use href="#moon"/></svg><b class="s5"></b><svg class="i"><use href="#cop"/></svg><b class="s1"></b><svg class="i"><use href="#blk"/></svg><b class="s6"></b>
    <svg class="i"><use href="#gmat"/></svg><i class="dd"></i><b class="s7"></b><svg class="i"><use href="#gwav"/></svg><b class="s1"></b><i class="chev"></i><b class="s3"></b>
    <svg class="i"><use href="#gwav"/></svg><b class="s7"></b>
    <span class="i tx gr">X</span><b class="s1"></b><span class="i tx gr on">Y</span><span class="i tx gr">Z</span><svg class="i"><use href="#bar1"/></svg><svg class="i"><use href="#gdash"/></svg><b class="s6"></b>
    <svg class="i"><use href="#nav1"/></svg><svg class="i"><use href="#nav2"/></svg><svg class="i"><use href="#nav2"/></svg><svg class="i"><use href="#nav3"/></svg><b class="s1"></b><i class="chev"></i>
  </div>

  <div class="tb tb2">
    <svg class="i"><use href="#bkl"/></svg><b class="s1"></b><svg class="i"><use href="#bkr"/></svg><svg class="i"><use href="#bk3"/></svg><b class="s4"></b>
    <svg class="i"><use href="#pt1"/></svg><svg class="i"><use href="#pt2"/></svg><b class="s6"></b>
    <svg class="i"><use href="#grp"/></svg><b class="s1"></b><svg class="i"><use href="#pin"/></svg><b class="s6"></b>
    <svg class="i"><use href="#undo"/></svg><i class="chev"></i><b class="s5"></b>
    <svg class="i"><use href="#ch1"/></svg><svg class="i"><use href="#ch2"/></svg><b class="s5"></b>
    <svg class="i"><use href="#ch3"/></svg><svg class="i"><use href="#ch4"/></svg><svg class="i"><use href="#ch4"/></svg><b class="s6"></b>
    <svg class="i"><use href="#ch5"/></svg><b class="s5"></b>
    <svg class="i"><use href="#ch6"/></svg><svg class="i"><use href="#gcirc"/></svg><svg class="i"><use href="#gcirc"/></svg><i class="chev"></i><b class="s6"></b>
    <svg class="i"><use href="#cut"/></svg><svg class="i"><use href="#cp"/></svg><b class="s1"></b><svg class="i"><use href="#paste"/></svg><svg class="i"><use href="#undob"/></svg><svg class="i"><use href="#cp"/></svg><i class="chev"></i><b class="s10"></b>
    <span class="combo c105"><span class="fonti">T<small>T</small></span><span class="ctxt lt">默认: Times New R</span></span><b class="s3"></b>
    <span class="combo c49"><span class="ctxt lt zero">0</span></span><b class="s2"></b>
    <span class="n tx bd">B</span><span class="n tx it">I</span><span class="n tx ul">U</span><span class="n tx sm">x²</span><span class="n tx sm">x₂</span><span class="n tx sm">x</span><b class="s3"></b>
    <span class="n tx sm2">αβ</span><span class="n tx lg">A</span><span class="n tx">A</span><b class="s1"></b>
    <svg class="i"><use href="#alef"/></svg><i class="dd"></i><svg class="i"><use href="#border"/></svg><i class="dd"></i><b class="s2"></b><svg class="i"><use href="#tri"/></svg><i class="dd"></i><b class="s1"></b><i class="chev"></i><b class="s8"></b>
    <svg class="i"><use href="#fill"/></svg><i class="dd"></i><b class="s3"></b><svg class="i"><use href="#sphere"/></svg><i class="dd"></i><b class="s3"></b><svg class="i"><use href="#pencil"/></svg><i class="dd"></i><b class="s1"></b><svg class="i"><use href="#hat"/></svg><b class="s3"></b>
    <span class="combo c46"><span class="lnline"></span><span class="ctxt lt shi">实</span></span><b class="s5"></b>
    <span class="combo c49"><span class="ctxt lt zero">0</span></span><b class="s4"></b>
    <span class="combo c31"><span class="swatch"></span></span><b class="s4"></b>
    <span class="combo c47"><span class="ctxt lt zero">0</span></span><b class="s4"></b>
    <svg class="i"><use href="#pat"/></svg><i class="dd"></i><b class="s1"></b><svg class="i"><use href="#gridg"/></svg><i class="dd"></i><svg class="i"><use href="#grid3"/></svg><b class="s2"></b><i class="chev"></i>
  </div>

  <div class="work">
    <div class="wleft">
      <div class="mid">
        <div class="lpanel"><span class="vt vt1">项目管理器 (2)</span><span class="vt vt2">消息日志</span><span class="vt vt3">提示日志</span></div>
        <div class="ltb">
          <div class="vbar vb1">
            <div class="vr"><svg class="i on"><use href="#sel"/></svg></div><b class="s2"></b>
            <div class="vr"><svg class="i"><use href="#zoomi"/></svg></div>
            <div class="vr"><svg class="i"><use href="#zoomo"/></svg></div>
            <div class="vr"><svg class="i"><use href="#pmv"/></svg></div>
            <div class="vr"><svg class="i"><use href="#tgt"/></svg><i class="dd"></i></div>
            <div class="vr"><svg class="i"><use href="#mv"/></svg></div>
            <div class="vr"><svg class="i"><use href="#mask"/></svg><i class="dd"></i></div>
            <div class="vr"><svg class="i"><use href="#spl"/></svg><i class="dd"></i></div>
            <div class="vr"><svg class="i"><use href="#dots"/></svg></div>
            <div class="vr"><span class="i tx ser">T</span></div>
            <div class="vr"><svg class="i"><use href="#eras"/></svg><i class="dd"></i></div>
            <div class="vr"><svg class="i"><use href="#arr"/></svg><i class="dd"></i></div>
            <div class="vr"><svg class="i"><use href="#ln"/></svg><i class="dd"></i></div>
            <div class="vr"><svg class="i"><use href="#rc"/></svg><i class="dd"></i></div>
            <div class="vr"><svg class="i"><use href="#hand"/></svg></div>
            <div class="vr"><svg class="i"><use href="#wb"/></svg><i class="dd"></i></div>
            <div class="vr"><svg class="i"><use href="#wr"/></svg><i class="dd"></i></div>
            <div class="vr"><svg class="i"><use href="#gr2"/></svg></div>
            <div class="vr"><svg class="i"><use href="#gry"/></svg></div>
            <b class="s17"></b>
            <div class="vr"><svg class="i"><use href="#clr"/></svg></div>
            <div class="vr"><svg class="i"><use href="#cog"/></svg></div>
            <div class="vr"><svg class="i"><use href="#cy"/></svg></div>
            <div class="vr"><svg class="i"><use href="#rdr"/></svg></div>
            <div class="vr"><svg class="i"><use href="#msr"/></svg><i class="dd"></i></div>
            <div class="vr"><svg class="i"><use href="#rdl"/></svg></div>
            <div class="vr"><svg class="i"><use href="#rdc"/></svg></div>
            <div class="vr"><svg class="i"><use href="#gdocs"/></svg></div>
            <div class="vr"><svg class="i"><use href="#cols"/></svg></div>
            <div class="vr"><span class="i tx sq">√α</span></div>
            <i class="vchev"></i>
          </div>
          <div class="vbar vb2">
            <div class="vr"><svg class="i"><use href="#gX"/></svg></div>
            <div class="vr"><svg class="i"><use href="#gX2"/></svg></div><b class="s5"></b>
            <div class="vr"><svg class="i"><use href="#gX3"/></svg></div>
            <div class="vr"><svg class="i"><use href="#gX4"/></svg></div><b class="s5"></b>
            <div class="vr"><svg class="i"><use href="#gdocs"/></svg></div>
            <i class="vchev"></i>
          </div>
        </div>
        <div class="page">
          <span class="wintab">1</span>
          <svg class="chart" viewBox="42 77 736 565">
            <g stroke="#fff" stroke-width="1">
              <path d="M294 355.300L178 278.700A139 139 0 0 1 403.800 270.200Z" fill="#4472c0"/>
              <path d="M294 355.300L403.800 270.200A139 139 0 0 1 404.500 439.400Z" fill="#76c0cb"/>
              <path d="M294 355.300L404.500 439.400A139 139 0 0 1 331 489.300Z" fill="#e9f4f6"/>
              <path d="M294 355.300L331 489.300A139 139 0 0 1 244.300 485.100Z" fill="#27273f"/>
              <path d="M294 355.300L244.300 485.100A139 139 0 0 1 174.100 425.200Z" fill="#6d76ac"/>
              <path d="M294 355.300L174.100 425.200A139 139 0 0 1 178 278.700Z" fill="#1f4fa8"/>
            </g>
            <path class="dash" d="M404 270L545 244.500M405 441L545 466.500"/>
            <g stroke="#fff" stroke-width="1">
              <rect x="545" y="244.500" width="111" height="37.500" fill="#27273f"/>
              <rect x="545" y="282.500" width="111" height="40" fill="#6d76ac"/>
              <rect x="545" y="323" width="111" height="42.500" fill="#1f4fa8"/>
              <rect x="545" y="365.500" width="111" height="45" fill="#4472c0"/>
              <rect x="545" y="410.500" width="111" height="56.500" fill="#8cb1e6"/>
            </g>
            <g class="lbl lw">
              <text x="272" y="268">Italy</text><text x="272" y="286">30.3%</text>
              <text x="189.500" y="349.500">Ireland</text><text x="190" y="367">17.7%</text>
              <text x="219" y="415.500">Iceland</text><text x="219.500" y="433">10.7%</text>
              <text x="270" y="436">Greece</text><text x="271" y="453.500">10.2%</text>
              <text x="590" y="259">Austria</text><text x="591" y="276.500">3.6%</text>
              <text x="587.500" y="298.500">Belgium</text><text x="587.500" y="316">3.8%</text>
              <text x="585" y="340">Denmark</text><text x="585" y="358">4.1%</text>
              <text x="590" y="384">Finland</text><text x="590" y="401.500">4.2%</text>
            </g>
            <g class="lbl ld">
              <text x="315" y="421">Germany</text><text x="315" y="438.500">10.2%</text>
              <text class="cjk" x="365" y="351.500">其他</text><text x="364.500" y="369">21%</text>
              <text x="592" y="435">France</text><text x="592" y="452.500">5.3%</text>
            </g>
            <circle cx="542" cy="528" r="15.500" fill="#f6ef6a"/>
            <path d="M542 526.500v12l2.800-2.600 2 3.800 1.700-.9-2-3.700 3.600-.3z" fill="#fff" stroke="#111" stroke-width=".9"/>
          </svg>
        </div>
        <div class="grayarea"></div>
        <div class="rtb">
          <div class="vbar rb1">
            <div class="vr"><svg class="i on"><use href="#rt1"/></svg></div>
            <div class="vr"><svg class="i"><use href="#axr"/></svg></div>
            <div class="vr"><svg class="i"><use href="#axk"/></svg></div>
            <div class="vr"><svg class="i"><use href="#axm"/></svg></div>
            <div class="vr"><svg class="i"><use href="#swl"/></svg></div>
            <div class="vr"><svg class="i on"><use href="#rns"/></svg></div><b class="s6"></b>
            <div class="vr"><svg class="i"><use href="#r1"/></svg></div>
            <div class="vr"><svg class="i"><use href="#r2"/></svg></div>
            <div class="vr"><svg class="i"><use href="#r2"/></svg></div>
            <div class="vr"><svg class="i"><use href="#r3"/></svg></div><b class="s6"></b>
            <div class="vr"><svg class="i"><use href="#bx"/></svg></div>
            <div class="vr"><svg class="i"><use href="#bxg"/></svg></div>
            <div class="vr"><svg class="i"><use href="#bxh"/></svg></div>
            <div class="vr"><svg class="i"><use href="#bxd"/></svg></div>
            <div class="vr"><svg class="i"><use href="#bxr"/></svg></div>
            <div class="vr"><svg class="i"><use href="#bxs"/></svg></div>
            <i class="vchev"></i>
          </div>
          <div class="vbar rb2">
            <div class="vr"><svg class="i"><use href="#a1"/></svg></div>
            <div class="vr"><svg class="i"><use href="#a1"/></svg></div><b class="s6"></b>
            <div class="vr"><svg class="i"><use href="#a2"/></svg></div>
            <div class="vr"><svg class="i"><use href="#a2"/></svg></div><b class="s6"></b>
            <div class="vr"><svg class="i"><use href="#a1"/></svg></div>
            <div class="vr"><svg class="i"><use href="#a2"/></svg></div><b class="s5"></b>
            <div class="vr"><svg class="i"><use href="#a1"/></svg></div>
            <div class="vr"><svg class="i"><use href="#a2"/></svg></div><b class="s6"></b>
            <div class="vr"><svg class="i"><use href="#a2"/></svg></div>
            <div class="vr"><svg class="i"><use href="#a1"/></svg></div>
            <div class="vr"><svg class="i"><use href="#a3"/></svg><i class="dd"></i></div><b class="s5"></b>
            <div class="vr"><svg class="i"><use href="#a3"/></svg></div>
            <div class="vr"><svg class="i"><use href="#a3"/></svg></div><b class="s6"></b>
            <div class="vr"><svg class="i"><use href="#a5"/></svg></div>
            <div class="vr"><svg class="i"><use href="#a6"/></svg></div><b class="s5"></b>
            <div class="vr"><svg class="i"><use href="#a4"/></svg></div>
            <div class="vr"><svg class="i"><use href="#a4"/></svg></div>
            <i class="vchev"></i>
          </div>
        </div>
      </div>
      <div class="bottom">
        <div class="tb bt1">
          <svg class="i"><use href="#s1"/></svg><i class="dd"></i><b class="s1"></b><svg class="i"><use href="#s2"/></svg><i class="dd"></i><svg class="i"><use href="#s3"/></svg><i class="dd"></i><svg class="i"><use href="#s4"/></svg><i class="dd"></i><b class="s1"></b><svg class="i"><use href="#s5"/></svg><i class="dd"></i><svg class="i"><use href="#s6"/></svg><i class="dd"></i><svg class="i"><use href="#s7"/></svg><i class="dd"></i><svg class="i"><use href="#s8"/></svg><i class="dd"></i><svg class="i"><use href="#s9"/></svg><i class="dd"></i><svg class="i"><use href="#s10"/></svg><i class="chev"></i>
        </div>
        <div class="tb bt2">
          <svg class="i"><use href="#t1"/></svg><i class="dd"></i><b class="s5"></b><svg class="i"><use href="#t1"/></svg><i class="dd"></i><b class="s1"></b><svg class="i"><use href="#t1"/></svg><i class="dd"></i><svg class="i"><use href="#t2"/></svg><i class="dd"></i><svg class="i"><use href="#t2"/></svg><i class="dd"></i><b class="s1"></b><svg class="i"><use href="#t3"/></svg><i class="chev"></i>
        </div>
        <div class="tb bt3">
          <svg class="i"><use href="#q1"/></svg><svg class="i"><use href="#q1"/></svg><b class="s5"></b><svg class="i"><use href="#q1"/></svg><svg class="i"><use href="#q2"/></svg><svg class="i"><use href="#q3"/></svg><b class="s5"></b><svg class="i"><use href="#q4"/></svg><i class="chev"></i>
        </div>
        <div class="tb bt4">
          <svg class="i"><use href="#b1"/></svg><svg class="i"><use href="#b1"/></svg><svg class="i"><use href="#b1"/></svg><svg class="i"><use href="#b1"/></svg><svg class="i"><use href="#b2"/></svg><svg class="i"><use href="#b3"/></svg><svg class="i"><use href="#b3"/></svg><svg class="i"><use href="#b4"/></svg><svg class="i"><use href="#a4"/></svg><svg class="i"><use href="#b4"/></svg><svg class="i"><use href="#b4"/></svg><b class="s2"></b>
          <span class="combo c51"><span class="ctxt lt zero">10</span></span><i class="chev"></i>
        </div>
      </div>
    </div>
    <div class="rpanels">
      <div class="ptitle"><span>对象管理器</span><span class="pctl"><i class="ptri"></i><i class="ppin"></i><span class="px">×</span></span></div>
      <div class="obox">
        <div class="otb"><svg class="oi" viewBox="0 0 16 16"><path d="M2 1v13h13" fill="none" stroke="#222"/><path d="M3 11l3-5 3 3 4-5" fill="none" stroke="#c22" stroke-width="1.500"/></svg><svg class="oi" viewBox="0 0 16 16"><rect x="1.500" y="2" width="13" height="9" fill="#fff" stroke="#24b"/><path d="M8 4v10M5 11l3 3 3-3" fill="none" stroke="#d33" stroke-width="1.500"/></svg></div>
        <div class="row rsel"><i class="ex ex1"></i><svg class="fico" viewBox="0 0 14 12"><path d="M1 11V2h4l1 1.500h6V11z" fill="#e4b545"/><path d="M1 11l2-6h10l-2 6z" fill="#f7d97a"/></svg><span>Bar of Pie</span></div>
        <div class="row r2"><i class="ex ex2"></i><i class="chk">✓</i><span>Layer1</span></div>
        <div class="row r3"><i class="chk">✓</i><i class="sw"></i><strong>2010</strong></div>
      </div>
      <div class="ptitle ap"><span>Apps</span><span class="pctl"><i class="ptri"></i><i class="ppin"></i><span class="px">×</span></span></div>
      <div class="abox">
        <div class="atabs">
          <svg class="tabshape" viewBox="0 0 19 130"><path class="ts2" d="M19 82L4 85Q3 85 3 86V111L19 122"/><path class="ts1" d="M19 45L4 54Q3 55 3 56V71Q3 72 4 73L19 82"/></svg>
          <i class="nv nvt"></i><i class="nv nvu"></i><i class="nv nvd"></i><i class="nv nvb"></i>
          <span class="vtab vtab1">所有</span>
          <span class="vtab vtab2">连接器</span>
        </div>
        <div class="alist">
          <div class="app1 a0">
            <svg class="ai1" viewBox="0 0 28 28"><rect x="1" y="1" width="23" height="22" fill="#e8eef4" stroke="#7aa"/><path d="M1 1h23v4H1z" fill="#2f8fd8"/><path d="M4 8h7v12H4z" fill="#c8ced4"/><path d="M13 8h8v5h-8z" fill="#dde"/><circle cx="20" cy="20" r="7.500" fill="#3ca64a"/><path d="M20 15.500v9M15.500 20h9" stroke="#fff" stroke-width="2.600"/></svg>
            <span>添加App</span>
          </div>
          <div class="app1 a1x"><span class="tdt">天地图</span><span>Tianditu<br>Map Import</span></div>
          <div class="app1 a2x">
            <svg class="pinx" viewBox="0 0 20 26"><path d="M10 25C6 18 2 14 2 9a8 8 0 0 1 16 0c0 5-4 9-8 16z" fill="#e4151f"/><circle cx="10" cy="9" r="5.500" fill="#fff"/><circle cx="10" cy="9" r="3.500" fill="#c8b8e8"/></svg>
            <span>Baidu Map<br>Import</span>
          </div>
          <div class="app1 a3x">
            <svg class="pinx" viewBox="0 0 20 26"><path d="M10 25C6 18 2 14 2 9a8 8 0 0 1 16 0c0 5-4 9-8 16z" fill="#1a8a1e"/><circle cx="10" cy="9" r="5.500" fill="#fff"/><circle cx="10" cy="9" r="3.500" fill="#b8b0ee"/></svg>
            <span>Google<br>Map Import</span>
          </div>
          <div class="app1 a4x">
            <svg class="globe" viewBox="0 0 26 26"><circle cx="13" cy="13" r="12.500" fill="#86cfe0"/><path d="M4 8c4-5 12-7 18-3 1 3-2 3-3 6-1 4-2 7-5 9-2-4-1-6-4-8-3 0-6 0-6-4z" fill="#5a5030"/><path d="M8 5l6-2 3 3-4 2z" fill="#a0955a"/></svg>
            <span>Maps<br>Online</span>
          </div>
          <svg class="pyr" viewBox="0 0 26 26"><path d="M13 0l13 26H0z" fill="#555"/><path d="M13 0l5 10H8z" fill="#f2c830"/><path d="M8 11h6l-2 7H4z" fill="#3aa37a"/><path d="M15 11h4l3 7h-8z" fill="#2c7f8a"/><path d="M2 20h10v6H0z" fill="#c86030"/><path d="M14 20h9l3 6H14z" fill="#b84070"/></svg>
          <span class="ascroll"></span>
        </div>
      </div>
    </div>
  </div>

  <div class="status">
    <span class="st st1">--</span><span class="st st2">AU : 开</span><span class="st st3">Light Grids</span><span class="st st4">1:[Book24]Sheet1!Col("2010")[1:10]</span><span class="st st5">19KB - [Graph24]1!</span><span class="st st6">弧度</span>
  </div>

  <div class="task">
    <svg class="tk tk1" viewBox="0 0 20 20"><path d="M0 0h9.500v9.500H0z" fill="#2e9be6"/><path d="M10.500 0H20v9.500h-9.500z" fill="#4bb6ee"/><path d="M0 10.500h9.500V20H0z" fill="#1d86d8"/><path d="M10.500 10.500H20V20h-9.500z" fill="#2e9be6"/></svg>
    <svg class="tk tk2" viewBox="0 0 20 20"><path d="M7 1h12v12H7z" fill="#fff"/><path d="M1 6h14v13H1z" fill="#1a1a1a"/><path d="M7 6h8v7H7z" fill="#c4c4c4"/></svg>
    <svg class="tk tk3" viewBox="0 0 20 20"><circle cx="10" cy="10" r="9.500" fill="#18a0dc"/><path d="M1 9C1 15 5 19.500 11 19.500c3 0 6-1.500 7.500-4-3 1.500-8 1-9.500-2.500C7.500 9 11 6 14 7 10 3 2 3 1 9z" fill="#38cda0"/><path d="M9 13c.5-3 3.500-5 6.500-4.500 1.800.3 2.800 1.500 3.500 3H9z" fill="#0d5fb0"/><path d="M9.500 13h9c-1.500 2-6 3-9-0z" fill="#e8f6fb"/></svg>
    <svg class="tk tk4" viewBox="0 0 20 20"><rect x="1" y="1" width="18" height="18" rx="4" fill="#ee5f9c"/><circle cx="10" cy="11" r="5" fill="#fff"/><circle cx="10" cy="11" r="2.500" fill="#3677c9"/><circle cx="4.500" cy="4.500" r="2.500" fill="#fff"/><circle cx="15.500" cy="4.500" r="2.500" fill="#fff"/></svg>
    <span class="tksel"><svg class="tk5" viewBox="0 0 20 20"><path d="M3 1h14v18H3z" fill="#f7f7f7" stroke="#bbb"/><circle cx="10" cy="10" r="7" fill="#ee9680"/><circle cx="10" cy="10" r="4" fill="#f8d6c4"/><circle cx="10" cy="10" r="1.800" fill="#b5352f"/></svg><i class="tkbar"></i></span>
    <svg class="tk tk6" viewBox="0 0 20 20"><path d="M1 3h7l2 2h9v13H1z" fill="#f2bd2a"/><path d="M1 7h18v11H1z" fill="#ffd85a"/><path d="M6 13h13v5H6z" fill="#1383c9"/></svg>
    <span class="tray">
      <svg class="trc" viewBox="0 0 12 12"><path d="M1.500 8L6 3.500 10.500 8" fill="none" stroke="#222" stroke-width="1.300"/></svg>
      <svg class="trm" viewBox="0 0 14 20"><rect x="4.500" y="1" width="5" height="11" rx="2.500" fill="none" stroke="#333"/><path d="M2 9a5 5 0 0 0 10 0M7 14v4" fill="none" stroke="#333"/></svg>
      <span class="trt">英</span>
      <svg class="trw" viewBox="0 0 14 12"><path d="M1 4.500a8 8 0 0 1 12 0M3 7a5 5 0 0 1 8 0M5 9.300a2.500 2.500 0 0 1 4 0" fill="none" stroke="#333"/></svg>
      <svg class="trs" viewBox="0 0 14 14"><path d="M1 5h2.500L7 2v10L3.500 9H1z" fill="none" stroke="#333"/><path d="M9 4.500a3.500 3.500 0 0 1 0 5M11 3a6 6 0 0 1 0 8" fill="none" stroke="#333"/></svg>
      <svg class="trb" viewBox="0 0 16 14"><path d="M2 3h11v9H2z" fill="#222"/><path d="M13 5h2v4h-2z" fill="#222"/><path d="M3 1l2 2" stroke="#222"/><path d="M4 6h4" stroke="#cfe8ec"/></svg>
      <span class="sign"><span class="sg sg1">飞</span><span class="sg sg2">飞</span><span class="sg sg3">吱</span><span class="sg sg4">吱</span></span>
    </span>
  </div>

  <svg class="magnify" viewBox="0 0 28 30"><circle cx="12" cy="14" r="11" fill="#e8a888" opacity=".6"/><circle cx="12" cy="11" r="8.500" fill="#c8b8c0" stroke="#2f7de0" stroke-width="2.500"/><path d="M18 18l6 7" stroke="#2f7de0" stroke-width="3"/></svg>
  <span class="wmark">爱信助学</span>
  <span class="wblob"></span>
</div>
</body>
</html>
```

FILE: styles.css
```css
* { box-sizing: border-box; }
html, body { margin: 0; padding: 0; }
body { width: 1280px; height: 720px; overflow: hidden; background: #eef2f9; font-family: Roboto, "Noto Sans CJK SC", sans-serif; color: #333; }
.defs { position: absolute; width: 0; height: 0; }
.app { position: relative; width: 1280px; height: 720px; display: flex; flex-direction: column; background: linear-gradient(#e8f2f8, #f0f3fb 80px); }

.title { height: 20px; display: flex; align-items: center; font-size: 10.400px; padding-left: 2px; flex: none; }
.appico { width: 15px; height: 15px; margin-right: 2px; }
.ttext { color: #3a3a3a; white-space: nowrap; }
.winbtns { margin-left: auto; display: flex; gap: 28px; margin-right: 15px; }
.wbt { width: 12px; height: 12px; }

.menu { height: 18px; display: flex; align-items: center; font-size: 9.300px; padding-left: 7px; flex: none; }
.menuico { width: 13px; height: 13px; margin-right: 7px; }
.mi { margin-right: 9px; white-space: nowrap; color: #3a3a3a; }
.mdibtns { margin-left: auto; margin-right: 3px; display: flex; align-items: center; gap: 5px; }
.mdi { width: 9px; text-align: center; font-size: 10px; }
.mdig { color: #aaa; }
.mdis { width: 9px; height: 9px; }

.tb { display: flex; align-items: center; width: fit-content; flex: none; background: linear-gradient(#f5f6fb 0%, #e6e7ef 45%, #c4c6d1 100%); border-radius: 0 4px 4px 0; }
.tb1 { height: 19px; padding-left: 6px; }
.tb2 { height: 20px; padding-left: 6px; }

.i { width: 14.600px; height: 14px; flex: none; display: block; filter: blur(.3px); }
.n { width: 14px; height: 14px; flex: none; display: block; }
.on { background: #cfe3f6; outline: 1px solid #5d9fd8; outline-offset: -1px; }
.tx { font-size: 12px; line-height: 14px; text-align: center; font-family: "Liberation Serif", serif; color: #555; }
.gr { font-family: Roboto, sans-serif; color: #777; font-size: 11px; }
.bd { font-weight: bold; }
.it { font-style: italic; }
.ul { text-decoration: underline; }
.sm { font-size: 10px; }
.sm2 { font-size: 10.500px; }
.lg { font-size: 15px; }
.ser { font-weight: bold; font-size: 14px; color: #222; }
.sq { color: #1a3ac8; font-weight: bold; font-size: 12px; white-space: nowrap; font-family: "Liberation Sans", sans-serif; }
.dd { display: block; flex: none; width: 6px; height: 4px; position: relative; }
.dd::after { content: ""; position: absolute; left: 1px; top: 1px; border-left: 2px solid transparent; border-right: 2px solid transparent; border-top: 2.500px solid #444; }
.chev { display: block; flex: none; width: 9px; align-self: stretch; background: linear-gradient(90deg, #c2c4ce, #dcdee6); border-radius: 0 3px 3px 0; position: relative; }
.chev::after { content: ""; position: absolute; left: 2.500px; bottom: 2px; width: 4px; height: 4px; clip-path: polygon(0 0, 100% 0, 100% 40%, 50% 100%, 0 40%); background-color: #333; }
.s1 { display: block; flex: none; width: 1px; height: 1px; }
.s2 { display: block; flex: none; width: 2px; height: 2px; }
.s3 { display: block; flex: none; width: 3px; height: 3px; }
.s4 { display: block; flex: none; width: 4px; height: 4px; }
.s5 { display: block; flex: none; width: 5px; height: 5px; }
.s6 { display: block; flex: none; width: 6px; height: 6px; }
.s7 { display: block; flex: none; width: 7px; height: 7px; }
.s8 { display: block; flex: none; width: 8px; height: 8px; }
.s10 { display: block; flex: none; width: 10px; height: 10px; }
.s17 { display: block; flex: none; height: 16.600px; }

.combo { display: flex; align-items: center; height: 15px; background: #f6f7fa; flex: none; position: relative; }
.c38 { width: 38px; background: #fbfbfd; }
.c105 { width: 105px; }
.c49 { width: 49px; }
.c46 { width: 46px; }
.c47 { width: 47px; }
.c31 { width: 31px; }
.c51 { width: 51px; }
.combo::after { content: ""; position: absolute; right: 3px; top: 6px; border-left: 2px solid transparent; border-right: 2px solid transparent; border-top: 2.500px solid #999; }
.c38::after { display: none; }
.ctxt { font-size: 10.500px; color: #666; padding-left: 3px; white-space: nowrap; }
.lt { color: #999; font-size: 9.400px; }
.fonti { font-family: "Liberation Serif", serif; font-weight: bold; font-size: 12px; color: #444; width: 16px; padding-left: 2px; line-height: 12px; }
.fonti small { font-size: 8px; }
.zero { padding-left: 4px; font-size: 10px; }
.lnline { display: block; width: 25px; height: 1px; background: #444; margin-left: 3px; }
.shi { padding-left: 2px; }
.swatch { display: block; width: 24px; height: 9px; margin-left: 2px; background: #e2e4ec; border: 1px solid #c8cad2; }

.work { display: flex; flex: 1; min-height: 0; height: 585px; }
.wleft { width: 1146px; display: flex; flex-direction: column; flex: none; }
.mid { height: 565px; display: flex; flex: none; }
.lpanel { width: 17px; flex: none; display: flex; flex-direction: column; align-items: center; padding-top: 8px; background: #eef0f9; }
.vt { writing-mode: vertical-rl; text-orientation: sideways; font-size: 9.500px; color: #a2a4ae; white-space: nowrap; line-height: 12px; }
.vt1 { font-size: 10.500px; }
.vt2 { margin-top: 33px; }
.vt3 { margin-top: 26px; }
.ltb { width: 24px; flex: none; display: flex; flex-direction: column; padding-top: 1px; background: #eef0f9; }
.vbar { display: flex; flex-direction: column; flex: none; background: linear-gradient(90deg, #f4f5fb 0%, #e5e6ef 50%, #b9bbca 100%); border-radius: 0 0 4px 0; }
.vb1 { padding: 3.700px 0 0 1px; height: 455px; }
.vb2 { padding: 4.700px 0 0 1px; width: 17px; height: 97px; margin-top: 2px; overflow: hidden; background: linear-gradient(90deg, #f0f1f6, #c9cad2); }
.vr { height: 14.600px; display: flex; align-items: center; flex: none; }
.vr .dd { margin-left: 0; width: 7px; }
.vchev { display: block; height: 9.300px; position: relative; flex: none; margin-top: 0; }
.vchev::after { content: ""; position: absolute; right: 3px; bottom: 1px; border-top: 2px solid transparent; border-bottom: 2px solid transparent; border-left: 3px solid #444; }
.page { width: 737px; flex: none; background: #fff; border-left: 1px solid #5a5a62; position: relative; }
.chart { display: block; width: 736px; height: 565px; }
.wintab { position: absolute; left: 0; top: 1px; width: 16px; height: 17px; background: #5e93cf; color: #fff; font: bold 13px/17px "Liberation Sans", sans-serif; text-align: center; }
.dash { fill: none; stroke: #555; stroke-width: 1; stroke-dasharray: 4 3; }
.lbl text { font-family: "Liberation Serif", "Noto Sans CJK SC", serif; font-size: 13px; letter-spacing: .5px; }
.lbl .cjk { font-weight: 300; letter-spacing: 0; }
.lw { fill: #f2f5ff; }
.ld { fill: #14233a; }
.grayarea { width: 340px; flex: none; background: #c0c0c0; }
.rtb { width: 28px; flex: none; display: flex; flex-direction: column; padding: 3px 3px 0 2px; background: #f0f2f8; }
.rb1 { padding: 2.700px 0 0 2px; height: 253px; }
.rb2 { padding: 8.700px 0 0 2px; height: 305px; margin-top: 2px; }

.bottom { height: 20px; display: flex; padding-left: 41px; flex: none; background: #eef0f8; }
.bt1 { height: 20px; padding-left: 4.700px; }
.bt2 { height: 20px; padding-left: 4.700px; margin-left: 1px; }
.bt3 { height: 20px; padding-left: 5px; margin-left: 0; }
.bt4 { height: 20px; padding-left: 7px; margin-left: 217px; }

.rpanels { width: 134px; flex: none; display: flex; flex-direction: column; padding-left: 1px; background: #f0f2f8; }
.ptitle { height: 18px; margin-top: 1px; display: flex; align-items: center; justify-content: space-between; font-size: 9.500px; padding: 0 2px 2px; background: linear-gradient(#e4e8f0, #eceef4); flex: none; }
.ap { margin-top: 3px; height: 19px; padding: 2px 2px 0; background: #eceff5; }
.pctl { display: flex; align-items: center; gap: 5px; }
.ptri { display: block; border-left: 3.500px solid transparent; border-right: 3.500px solid transparent; border-top: 4px solid #222; }
.ppin { display: block; width: 4px; height: 5px; border: 1px solid #333; }
.px { font-size: 12px; line-height: 10px; color: #222; }
.obox { height: 199px; border: 1px solid #6a6a72; background: #fff; flex: none; font-family: Roboto, sans-serif; font-size: 9.400px; }
.otb { height: 15px; display: flex; justify-content: flex-end; align-items: center; gap: 1px; padding-right: 1px; background: linear-gradient(#f6f6fa, #c8cad4); }
.oi { width: 13px; height: 13px; }
.row { display: flex; align-items: center; height: 14.500px; white-space: nowrap; }
.rsel { background: #0b6fd0; color: #fff; padding-left: 2px; }
.fico { width: 13px; height: 11px; margin: 0 1px 0 2px; }
.r2 { padding-left: 12px; }
.r3 { padding-left: 31px; color: #222; }
.ex { display: block; width: 9px; height: 9px; border: 1px solid #888; background: #fff linear-gradient(#555, #555) center / 5px 1px no-repeat; flex: none; }
.ex1 { background-color: #fff; }
.chk { display: block; width: 11px; height: 11px; margin-left: 2px; border-radius: 2px; background: #0b5fc0; color: #fff; font-style: normal; font-size: 8px; line-height: 11px; text-align: center; flex: none; }
.r2 .chk { margin-right: 1px; }
.sw { display: block; width: 26px; height: 7px; margin: 0 5px 0 4px; background: #27273f; }
.r3 strong { font-size: 9.500px; }

.abox { flex: none; height: 344px; display: flex; }
.atabs { width: 19px; flex: none; display: flex; flex-direction: column; align-items: center; padding-top: 2px; position: relative; background: #f3f4f8; }
.tabshape { position: absolute; left: 0; top: 0; width: 19px; height: 130px; }
.ts1 { fill: #fff; stroke: #666; stroke-width: .8; }
.ts2 { fill: #f0f1f6; stroke: #777; stroke-width: .8; }
.nv { display: block; height: 11px; position: relative; width: 7px; }
.nv::after { content: ""; position: absolute; left: 1px; top: 3px; border-left: 2.500px solid transparent; border-right: 2.500px solid transparent; }
.nvt::after { border-bottom: 3px solid #222; }
.nvt::before, .nvb::before { content: ""; position: absolute; left: 1px; width: 5px; height: 1px; background: #222; }
.nvt::before { top: 2px; }
.nvb::before { top: 7px; }
.nvu::after { border-bottom: 3px solid #222; }
.nvd::after, .nvb::after { border-top: 3px solid #222; }
.vtab { writing-mode: vertical-rl; text-orientation: sideways; display: block; width: 17px; margin-left: 1px; font-size: 10px; line-height: 15px; position: relative; }
.vtab1 { height: 37px; padding-top: 8px; font-weight: bold; color: #111; }
.vtab2 { height: 40px; padding-top: 2px; color: #444; }
.alist { width: 114px; flex: none; background: #fff; border-left: 1px solid #b4b6be; border-top: 1px solid #b4b6be; border-bottom: 1px solid #b4b6be; position: relative; overflow: hidden; padding-right: 48px; display: flex; flex-direction: column; align-items: center; font-family: "Open Sans", "Noto Sans CJK SC", sans-serif; font-size: 10.800px; line-height: 13px; color: #333; }
.app1 { display: flex; flex-direction: column; align-items: center; text-align: center; white-space: nowrap; flex: none; }
.ai1 { width: 27px; height: 27px; margin-bottom: 2px; display: block; }
.a0 { margin-top: 2px; }
.tdt { color: #e8742a; font-family: "Noto Sans CJK SC", serif; font-size: 7.500px; line-height: 10px; margin-bottom: 12px; font-weight: bold; }
.a1x { margin-top: 29px; }
.pinx { width: 20px; height: 25px; display: block; margin-bottom: 2px; }
.a2x { margin-top: 9px; }
.a3x { margin-top: 10px; }
.a4x { margin-top: 7px; }
.globe { width: 26px; height: 26px; display: block; margin-bottom: 4px; }
.pyr { width: 26px; height: 26px; flex: none; margin-top: 8px; }
.ascroll { position: absolute; right: 9px; top: 15px; width: 2px; height: 20px; background: #9a9aa0; }

.status { height: 19px; flex: none; display: flex; justify-content: flex-end; align-items: center; background: #f3f4f6; font-size: 9.500px; color: #444; white-space: nowrap; overflow: hidden; }
.st { display: block; height: 100%; line-height: 20px; border-right: 1px solid #dfe0e4; overflow: hidden; padding-left: 4px; flex: none; }
.st1 { width: 19px; }
.st2 { width: 40px; padding-left: 5px; }
.st3 { width: 52px; }
.st4 { width: 153px; padding-left: 4px; letter-spacing: -.12px; }
.st5 { width: 88px; padding-left: 4px; }
.st6 { width: 26px; border: 0; padding-left: 3px; }

.task { height: 39px; flex: none; display: flex; align-items: center; background: #cfe8ec; border-top: 1px solid #a9c8cf; padding-left: 538px; position: relative; }
.tk { display: block; width: 20px; height: 20px; flex: none; }
.tk2 { margin-left: 15px; }
.tk3 { margin-left: 19px; }
.tk4 { margin-left: 16px; }
.tksel { display: block; width: 31px; height: 32px; margin-left: 10px; background: #e2f0f3; position: relative; padding: 6px 0 0 5px; flex: none; }
.tk5 { display: block; width: 20px; height: 20px; }
.tkbar { position: absolute; left: 7px; bottom: 1px; width: 15px; height: 2px; background: #2a7f8f; }
.tk6 { margin-left: 11px; }
.tray { margin-left: auto; display: flex; align-items: center; padding-right: 15px; }
.trc { width: 12px; height: 12px; }
.trm { width: 14px; height: 20px; margin-left: 15px; }
.trt { font-size: 13px; margin-left: 12px; color: #222; }
.trw { width: 14px; height: 12px; margin-left: 14px; }
.trs { width: 14px; height: 14px; margin-left: 5px; }
.trb { width: 15px; height: 14px; margin-left: 6px; }
.sign { display: grid; grid-template-columns: 24px 31px; width: 55px; margin-left: 25px; font-size: 14px; line-height: 16px; font-family: "Noto Sans CJK SC", sans-serif; }
.sg1 { color: #a8407a; font-size: 12px; padding-left: 2px; }
.sg2 { color: #a040b0; font-size: 12px; padding-left: 2px; }
.sg3 { color: #8fbcb8; padding-left: 3px; }
.sg4 { color: #2a4a8a; padding-left: 13px; }

.magnify { position: absolute; left: 1px; top: 654px; width: 28px; height: 30px; }
.wmark { position: absolute; left: 1054px; top: 35px; color: #fff; font-size: 23px; letter-spacing: 1px; opacity: .75; filter: blur(1px); font-family: "Noto Sans CJK SC", sans-serif; }
.wblob { position: absolute; left: 1168px; top: 26px; width: 82px; height: 34px; background: rgba(255, 255, 255, .45); filter: blur(4px); }
```
